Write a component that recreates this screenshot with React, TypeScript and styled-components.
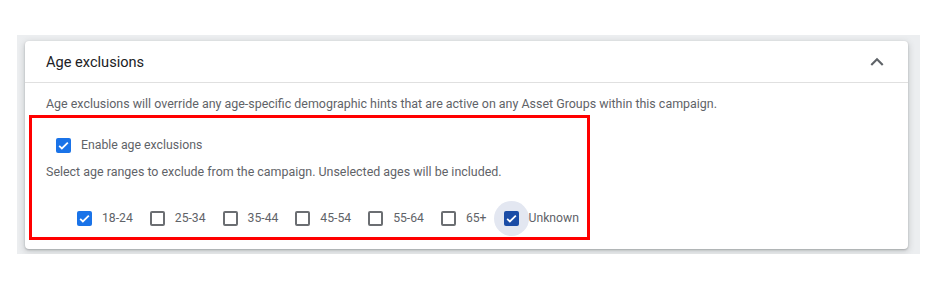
import React from "react";
import styled, { createGlobalStyle } from "styled-components";

const GlobalStyle = createGlobalStyle`
  html, body {
    margin: 0;
    padding: 0;
    background: #fff;
    font-family: Roboto, "Liberation Sans", Arial, sans-serif;
  }
`;

const Page = styled.div`
  padding: 35px 0 0 17px;
`;

const Backdrop = styled.div`
  width: 903px;
  box-sizing: border-box;
  padding: 6px 12px 5px 8px;
  background: #eceef0;
`;

const Card = styled.section`
  background: #fff;
  border-radius: 4px;
  box-shadow: 0 1px 2px rgba(60, 64, 67, 0.3), 0 2px 6px 1px rgba(60, 64, 67, 0.18);
`;

const Header = styled.div`
  height: 41px;
  display: flex;
  align-items: center;
  justify-content: space-between;
  padding: 0 18px 0 21px;
  border-bottom: 1px solid #e0e0e0;
`;

const Title = styled.h2`
  margin: 0;
  font-size: 14.6px;
  font-weight: 400;
  color: #202124;
`;

const Body = styled.div`
  padding: 13px 21px 9px;
`;

const Hint = styled.p<{ $gap?: number }>`
  margin: ${(p) => p.$gap ?? 0}px 0 0;
  font-size: 12.45px;
  line-height: 16px;
  color: #5f6368;
`;

const Highlight = styled.div`
  width: 561px;
  box-sizing: border-box;
  margin: 3px 0 0 -17px;
  padding: 17px 0 2px 14px;
  border: 3px solid #ff0000;
`;

const CheckRow = styled.label`
  display: flex;
  align-items: center;
  gap: 10px;
  height: 20px;
  margin-left: 10px;
  font-size: 12.3px;
  color: #5f6368;
`;

const AgeList = styled.div`
  display: flex;
  align-items: center;
  height: 34px;
  margin: 21px 0 0 31px;
  gap: 17px;
`;

const AgeItem = styled.label`
  display: flex;
  align-items: center;
  gap: 10px;
  isolation: isolate;
  font-size: 12.2px;
  color: #5f6368;
`;

const Box = styled.span<{ $checked?: boolean; $focused?: boolean }>`
  position: relative;
  flex: none;
  width: 15px;
  height: 15px;
  box-sizing: border-box;
  border-radius: 2px;
  display: flex;
  align-items: center;
  justify-content: center;
  background: ${(p) => (p.$checked ? (p.$focused ? "#1a4ca6" : "#1a73e8") : "#fff")};
  border: ${(p) => (p.$checked ? "none" : "2px solid #6b6e72")};

  &::before {
    content: "";
    display: ${(p) => (p.$focused ? "block" : "none")};
    position: absolute;
    left: 50%;
    top: 50%;
    width: 35px;
    height: 35px;
    margin: -17.5px 0 0 -17.5px;
    border-radius: 50%;
    background: #e3e7f1;
    z-index: -1;
  }

  svg {
    display: block;
  }
`;

const Chevron = () => (
  <svg width="26" height="26" viewBox="0 0 24 24" fill="#5f6368">
    <path d="M7.41 15.41L12 10.83l4.59 4.58L18 14l-6-6-6 6z" />
  </svg>
);

const Check = () => (
  <svg width="13" height="13" viewBox="0 0 24 24" fill="none" stroke="#fff" strokeWidth="3.2">
    <path d="M4 12.5l5 5L20 6.5" />
  </svg>
);

const Checkbox = ({ checked, focused }: { checked?: boolean; focused?: boolean }) => (
  <Box $checked={checked} $focused={focused}>
    {checked && <Check />}
  </Box>
);

const ages = [
  { label: "18-24", checked: true },
  { label: "25-34" },
  { label: "35-44" },
  { label: "45-54" },
  { label: "55-64" },
  { label: "65+" },
  { label: "Unknown", checked: true, focused: true },
];

export default function App() {
  return (
    <Page>
      <GlobalStyle />
      <Backdrop>
        <Card>
          <Header>
            <Title>Age exclusions</Title>
            <Chevron />
          </Header>
          <Body>
            <Hint>
              Age exclusions will override any age-specific demographic hints that are active on any Asset
              Groups within this campaign.
            </Hint>
            <Highlight>
              <CheckRow>
                <Checkbox checked />
                Enable age exclusions
              </CheckRow>
              <Hint $gap={9}>
                Select age ranges to exclude from the campaign. Unselected ages will be included.
              </Hint>
              <AgeList>
                {ages.map((a) => (
                  <AgeItem key={a.label}>
                    <Checkbox checked={a.checked} focused={a.focused} />
                    {a.label}
                  </AgeItem>
                ))}
              </AgeList>
            </Highlight>
          </Body>
        </Card>
      </Backdrop>
    </Page>
  );
}
